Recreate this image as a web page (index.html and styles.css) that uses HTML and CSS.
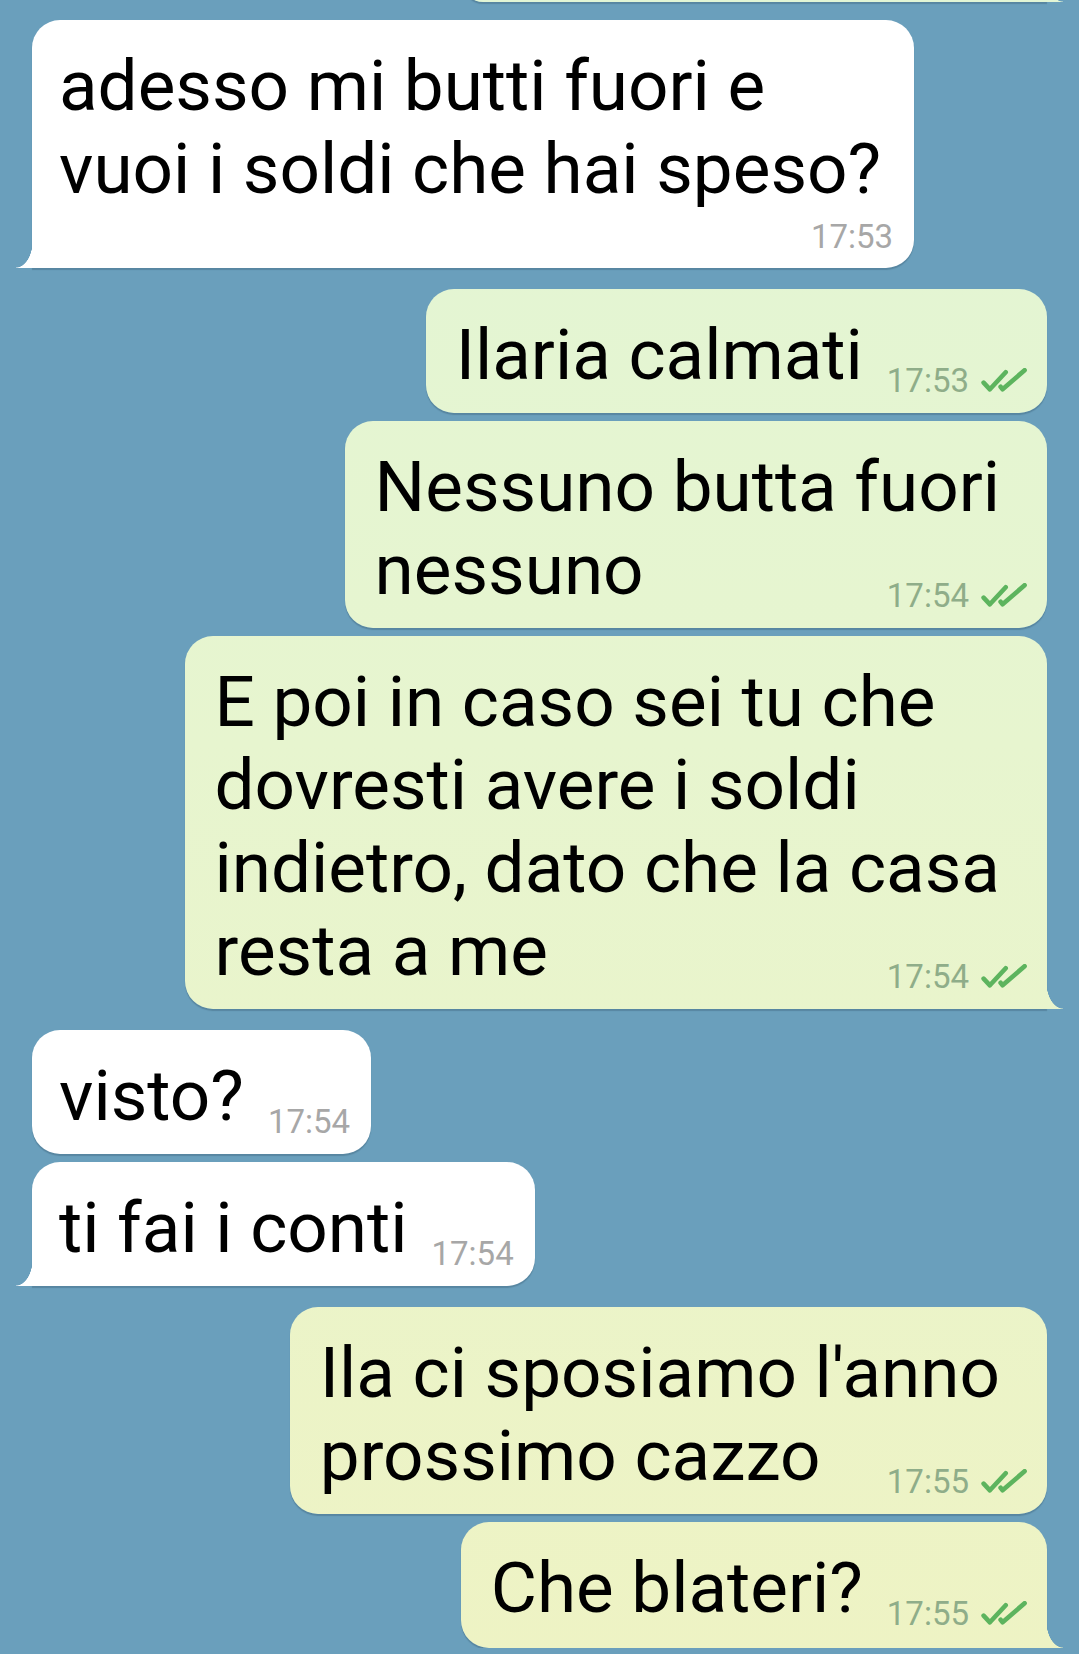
FILE: index.html
```html
<!DOCTYPE html>
<html lang="it">
  <head>
    <meta charset="UTF-8" />
    <meta name="viewport" content="width=device-width, initial-scale=1.0" />
    <title>Chat</title>
    <link rel="stylesheet" href="styles.css">
  </head>
  <body>
    <div class="chat">
      <!-- fondo del messaggio precedente, quasi fuori schermo -->
      <div class="bubble out tail cut"></div>

      <div class="bubble in tail">
        adesso mi butti fuori e<br>vuoi i soldi che hai speso?
        <span class="meta below"><span class="time">17:53</span></span>
      </div>

      <div class="bubble out">
        Ilaria calmati<span class="meta"><span class="time">17:53</span><svg class="check" viewBox="0 0 46 24"><path d="M2.6 14.6L8.9 21.3L24.7 4.2M19.6 18.8L21.6 21.3L43.6 2.2"/></svg></span>
      </div>
      <div class="bubble out">
        Nessuno butta fuori<br>nessuno<span class="meta"><span class="time">17:54</span><svg class="check" viewBox="0 0 46 24"><path d="M2.6 14.6L8.9 21.3L24.7 4.2M19.6 18.8L21.6 21.3L43.6 2.2"/></svg></span>
      </div>
      <div class="bubble out tail">
        E poi in caso sei tu che<br>dovresti avere i soldi<br>indietro, dato che la casa<br>resta a me<span class="meta"><span class="time">17:54</span><svg class="check" viewBox="0 0 46 24"><path d="M2.6 14.6L8.9 21.3L24.7 4.2M19.6 18.8L21.6 21.3L43.6 2.2"/></svg></span>
      </div>

      <div class="bubble in">
        visto?<span class="meta"><span class="time">17:54</span></span>
      </div>
      <div class="bubble in tail">
        ti fai i conti<span class="meta"><span class="time">17:54</span></span>
      </div>

      <div class="bubble out">
        Ila ci sposiamo l'anno<br>prossimo cazzo<span class="meta"><span class="time">17:55</span><svg class="check" viewBox="0 0 46 24"><path d="M2.6 14.6L8.9 21.3L24.7 4.2M19.6 18.8L21.6 21.3L43.6 2.2"/></svg></span>
      </div>
      <div class="bubble out tail last">
        Che blateri?<span class="meta"><span class="time">17:55</span><svg class="check" viewBox="0 0 46 24"><path d="M2.6 14.6L8.9 21.3L24.7 4.2M19.6 18.8L21.6 21.3L43.6 2.2"/></svg></span>
      </div>
    </div>
  </body>
</html>
```

FILE: styles.css
```css
body {
  margin: 0;
  background: #6a9fbc;
  font-family: Roboto, "Noto Sans", sans-serif;
  overflow: hidden;
}
.chat {
  display: flex;
  flex-direction: column;
  padding: 0 32px;
}
.bubble {
  position: relative;
  padding: 24px 47px 17px 30px;
  border-radius: 28px;
  font-size: 71px;
  line-height: 83px;
  color: #000;
  box-shadow: 0 2px 1px rgba(30, 60, 80, 0.25);
}
.bubble + .bubble {
  margin-top: 8px;
}
.in + .out,
.out + .in {
  margin-top: 21px;
}
.cut + .bubble {
  margin-top: 18px;
}
.in {
  align-self: flex-start;
  background: #fff;
  padding-left: 27px;
  padding-right: 33px;
}
.out {
  align-self: flex-end;
  background: linear-gradient(to bottom, #e2f5d5 0%, #e7f5cf 45%, #eef3c4 100%) fixed;
}
.last {
  padding-bottom: 19px;
}
.cut {
  width: 584px;
  height: 40px;
  padding: 0;
  margin-top: -38px;
}
.in.tail {
  border-bottom-left-radius: 0;
}
.out.tail {
  border-bottom-right-radius: 0;
}
.tail::after {
  content: "";
  position: absolute;
  bottom: 0;
  width: 17px;
  height: 28px;
  background: inherit;
}
.in.tail::after {
  left: -16px;
  -webkit-mask: radial-gradient(17px 28px at 0 0, transparent 97%, #000 100%);
  mask: radial-gradient(17px 28px at 0 0, transparent 97%, #000 100%);
}
.out.tail::after {
  right: -16px;
  -webkit-mask: radial-gradient(17px 28px at 100% 0, transparent 97%, #000 100%);
  mask: radial-gradient(17px 28px at 100% 0, transparent 97%, #000 100%);
}
.meta {
  float: right;
  display: flex;
  align-items: center;
  gap: 12px;
  margin: 51px -27px -2px 24px;
  font-size: 33px;
  line-height: 33px;
  color: #8fad89;
}
.in .meta {
  color: #a7a7a7;
  margin-right: -12px;
}
.meta.below {
  float: none;
  justify-content: flex-end;
  margin: 10px -12px -2px 0;
}
.check {
  width: 46px;
  height: 24px;
  margin-top: -2px;
  fill: none;
  stroke: #5db45e;
  stroke-width: 4.6;
  stroke-linecap: round;
  stroke-linejoin: round;
}
```
